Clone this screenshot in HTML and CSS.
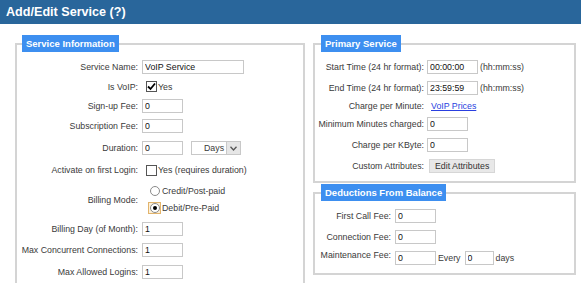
FILE: index.html
```html
<!DOCTYPE html>
<html lang="en">
<head>
  <meta charset="UTF-8" />
  <title>Add/Edit Service</title>
  <link rel="stylesheet" href="styles.css">
</head>
<body>
  <div class="header">Add/Edit Service (?)</div>
  <div class="content">
    <fieldset class="panel left">
      <legend>Service Information</legend>
      <div class="form service">
        <label>Service Name:</label>
        <div class="field"><input class="wide" value="VoIP Service"></div>

        <label>Is VoIP:</label>
        <div class="field">
          <span class="check on">
            <svg width="9" height="9" viewBox="0 0 9 9"><path d="M1 4.5 L3.5 7 L8 1.5" fill="none" stroke="#000" stroke-width="1.8"/></svg>
          </span>
          <span>Yes</span>
        </div>

        <label>Sign-up Fee:</label>
        <div class="field"><input value="0"></div>

        <label>Subscription Fee:</label>
        <div class="field"><input value="0"></div>

        <label>Duration:</label>
        <div class="field">
          <input value="0">
          <div class="select">
            <span>Days</span>
            <span class="arrow">
              <svg width="7" height="5" viewBox="0 0 7 5"><path d="M0.5 0.8 L3.5 4 L6.5 0.8" fill="none" stroke="#555" stroke-width="1.3"/></svg>
            </span>
          </div>
        </div>

        <label>Activate on first Login:</label>
        <div class="field">
          <span class="check"></span>
          <span>Yes (requires duration)</span>
        </div>

        <label>Billing Mode:</label>
        <div class="field radios">
          <span class="opt"><span class="radio-wrap"><span class="radio"></span></span>Credit/Post-paid</span>
          <span class="opt"><span class="radio-wrap focus"><span class="radio on"></span></span>Debit/Pre-Paid</span>
        </div>

        <label>Billing Day (of Month):</label>
        <div class="field"><input value="1"></div>

        <label>Max Concurrent Connections:</label>
        <div class="field"><input value="1"></div>

        <label>Max Allowed Logins:</label>
        <div class="field"><input value="1"></div>
      </div>
    </fieldset>

    <div class="side">
      <fieldset class="panel">
        <legend>Primary Service</legend>
        <div class="form primary">
          <label>Start Time (24 hr format):</label>
          <div class="field"><input class="time" value="00:00:00"><span class="hint">(hh:mm:ss)</span></div>

          <label>End Time (24 hr format):</label>
          <div class="field"><input class="time" value="23:59:59"><span class="hint">(hh:mm:ss)</span></div>

          <label>Charge per Minute:</label>
          <div class="field"><a href="#" class="link">VoIP Prices</a></div>

          <label>Minimum Minutes charged:</label>
          <div class="field"><input value="0"></div>

          <label>Charge per KByte:</label>
          <div class="field"><input value="0"></div>

          <label>Custom Attributes:</label>
          <div class="field"><button>Edit Attributes</button></div>
        </div>
      </fieldset>

      <fieldset class="panel deductions">
        <legend>Deductions From Balance</legend>
        <div class="form balance">
          <label>First Call Fee:</label>
          <div class="field"><input value="0"></div>

          <label>Connection Fee:</label>
          <div class="field"><input value="0"></div>

          <label class="top">Maintenance Fee:</label>
          <div class="field">
            <input value="0">
            <span class="every">Every</span>
            <input class="days" value="0">
            <span class="unit">days</span>
          </div>
        </div>
      </fieldset>
    </div>
  </div>
</body>
</html>
```

FILE: styles.css
```css
html, body {
  overflow: hidden;
}
body {
  margin: 0;
  background: #fff;
  font-family: "Liberation Sans", Arial, sans-serif;
  font-size: 8.8px;
  color: #3a3a3a;
}
.header {
  height: 24px;
  line-height: 24px;
  padding-left: 6px;
  background: #29669b;
  color: #fff;
  font-size: 12.6px;
  font-weight: bold;
}
.content {
  display: flex;
  gap: 8px;
  margin-top: 11px;
  padding-left: 15px;
}
.panel {
  margin: 0;
  padding: 4px 0 5px;
  border: 2px solid #d4d4d4;
  min-inline-size: 0;
  box-sizing: border-box;
}
.panel legend {
  margin-left: 5px;
  padding: 0 4px;
  height: 17px;
  line-height: 17px;
  background: #3d8ff0;
  color: #fff;
  font-size: 9.5px;
  font-weight: bold;
}
.left {
  width: 290px;
  padding-bottom: 20px;
}
.side {
  width: 263px;
}
.side .panel legend {
  margin-left: 6px;
}
.deductions {
  margin-top: 1px;
}
.form {
  display: grid;
}
.form label {
  display: flex;
  align-items: center;
  justify-content: flex-end;
  white-space: nowrap;
}
.form label.top {
  align-items: flex-start;
  padding-top: 1px;
  line-height: 12px;
}
.field {
  display: flex;
  align-items: center;
  white-space: nowrap;
}
.service {
  grid-template-columns: 125px 1fr;
  grid-template-rows: 21px 19px 19px 22px 22px 22px 37px 21px 22px 21px;
}
.service label {
  padding-right: 4px;
}
.primary {
  grid-template-columns: 112px 1fr;
  grid-template-rows: 21px 21px 16px 20px 22px 20px;
}
.primary label {
  padding-right: 3px;
}
.balance {
  grid-template-columns: 80px 1fr;
  grid-template-rows: 21px 22px 20px;
}
.balance label {
  padding-right: 4px;
}
input {
  box-sizing: border-box;
  width: 41px;
  height: 14px;
  margin: 0;
  padding: 0 2px;
  border: 1px solid #c8c8c8;
  font-family: inherit;
  font-size: 8.8px;
  color: #111;
}
input.wide {
  width: 102px;
}
input.time {
  width: 51px;
}
input.days {
  width: 29px;
}
.check {
  display: flex;
  align-items: center;
  justify-content: center;
  box-sizing: border-box;
  width: 11px;
  height: 11px;
  margin: 0 1px 0 4px;
  border: 1px solid #555;
  background: #fff;
}
.radios {
  flex-direction: column;
  align-items: flex-start;
  justify-content: center;
}
.opt {
  display: flex;
  align-items: center;
  height: 17px;
}
.radio-wrap {
  display: flex;
  align-items: center;
  justify-content: center;
  box-sizing: border-box;
  width: 13px;
  height: 12px;
  margin: 0 1px 0 6px;
  border: 1px solid transparent;
}
.radio-wrap.focus {
  border-color: #e2b46c;
  background: #fdf0d8;
}
.radio {
  display: flex;
  align-items: center;
  justify-content: center;
  box-sizing: border-box;
  width: 10px;
  height: 10px;
  border: 1px solid #8a8a8a;
  border-radius: 50%;
  background: #fff;
}
.radio.on::after {
  content: "";
  width: 4px;
  height: 4px;
  border-radius: 50%;
  background: #000;
}
.select {
  display: flex;
  box-sizing: border-box;
  width: 50px;
  height: 14px;
  margin-left: 8px;
  border: 1px solid #c8c8c8;
}
.select span:first-child {
  flex: 1;
  padding-left: 12px;
  line-height: 12px;
}
.select .arrow {
  display: flex;
  align-items: center;
  justify-content: center;
  width: 13px;
  background: #e6e6e6;
  border-left: 1px solid #c8c8c8;
}
.hint {
  margin-left: 2px;
}
.link {
  margin-left: 4px;
  color: #2a3fe0;
}
button {
  height: 14px;
  margin: 0 0 0 2px;
  padding: 0 5px;
  background: #e8e8e8;
  border: 1px solid #d6d6d6;
  font-family: inherit;
  font-size: 8.8px;
  color: #333;
  line-height: 12px;
}
.every {
  margin: 0 4px 0 2px;
}
.unit {
  margin-left: 2px;
}
```
